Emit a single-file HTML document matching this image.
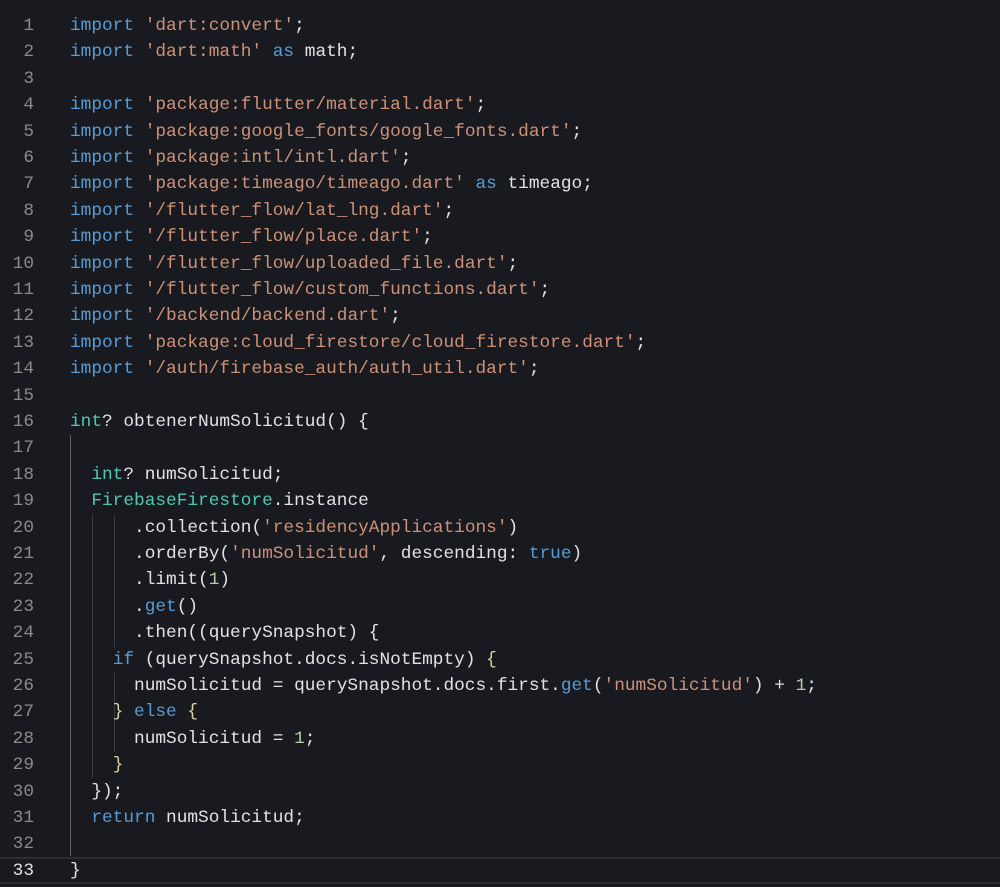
<!DOCTYPE html>
<html><head><meta charset="utf-8"><style>
body{margin:0;background:#181a1f;width:1000px;height:887px;overflow:hidden;position:relative;font-family:"Liberation Mono",monospace;font-size:17.8px;color:#e2e2e2}
.ln{position:absolute;left:0;width:34px;text-align:right;color:#8a8a8a}
.c{position:absolute;left:70px;white-space:pre}
.k{color:#569cd6}.s{color:#ce9178}.t{color:#4ec9b0}.n{color:#b5cea8}.y{color:#ddd2a0}
.g{position:absolute;width:1px;background:#3a3d42}
.cur{position:absolute;left:0;width:1000px;top:857px;height:27px;border-top:2px solid #2a2d32;border-bottom:2px solid #2a2d32;box-sizing:border-box}
</style></head><body>
<div class="cur"></div>
<div class="g" style="left:70px;top:435px;height:421px;background:#606368"></div>
<div class="g" style="left:92px;top:515px;height:263px"></div>
<div class="g" style="left:114px;top:515px;height:132px"></div>
<div class="g" style="left:114px;top:673px;height:79px"></div>
<div id="w"></div>
<script>
const L=[
"<span class=k>import</span> <span class=s>'dart:convert'</span>;",
"<span class=k>import</span> <span class=s>'dart:math'</span> <span class=k>as</span> math;",
"",
"<span class=k>import</span> <span class=s>'package:flutter/material.dart'</span>;",
"<span class=k>import</span> <span class=s>'package:google_fonts/google_fonts.dart'</span>;",
"<span class=k>import</span> <span class=s>'package:intl/intl.dart'</span>;",
"<span class=k>import</span> <span class=s>'package:timeago/timeago.dart'</span> <span class=k>as</span> timeago;",
"<span class=k>import</span> <span class=s>'/flutter_flow/lat_lng.dart'</span>;",
"<span class=k>import</span> <span class=s>'/flutter_flow/place.dart'</span>;",
"<span class=k>import</span> <span class=s>'/flutter_flow/uploaded_file.dart'</span>;",
"<span class=k>import</span> <span class=s>'/flutter_flow/custom_functions.dart'</span>;",
"<span class=k>import</span> <span class=s>'/backend/backend.dart'</span>;",
"<span class=k>import</span> <span class=s>'package:cloud_firestore/cloud_firestore.dart'</span>;",
"<span class=k>import</span> <span class=s>'/auth/firebase_auth/auth_util.dart'</span>;",
"",
"<span class=t>int</span>? obtenerNumSolicitud() {",
"",
"  <span class=t>int</span>? numSolicitud;",
"  <span class=t>FirebaseFirestore</span>.instance",
"      .collection(<span class=s>'residencyApplications'</span>)",
"      .orderBy(<span class=s>'numSolicitud'</span>, descending: <span class=k>true</span>)",
"      .limit(<span class=n>1</span>)",
"      .<span class=k>get</span>()",
"      .then((querySnapshot) {",
"    <span class=k>if</span> (querySnapshot.docs.isNotEmpty) <span class=y>{</span>",
"      numSolicitud = querySnapshot.docs.first.<span class=k>get</span>(<span class=s>'numSolicitud'</span>) + <span class=n>1</span>;",
"    <span class=y>}</span> <span class=k>else</span> <span class=y>{</span>",
"      numSolicitud = <span class=n>1</span>;",
"    <span class=y>}</span>",
"  });",
"  <span class=k>return</span> numSolicitud;",
"",
"}"];
let h="";
L.forEach((l,i)=>{const top=13+26.4*i;
h+=`<div class=ln style="top:${top}px;line-height:26.4px;${i==32?'color:#e0e0e0':''}">${i+1}</div><div class=c style="top:${top}px;line-height:26.4px">${l}</div>`;});
document.getElementById('w').innerHTML=h;
</script>
</body></html>
